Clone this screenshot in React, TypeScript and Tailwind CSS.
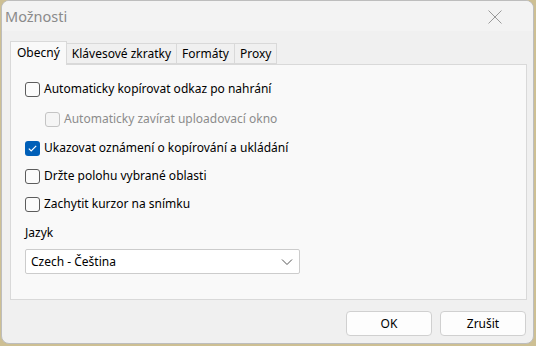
export default function App() {
  const font = { fontFamily: '"Segoe UI", "Noto Sans", sans-serif' }
  return (
    <div className="w-[536px] h-[346px] bg-[#cdbf93] overflow-hidden" style={font}>
      <div className="ml-[1px] w-[533px] h-[344px] rounded-[8px] bg-[#f0f0f0] border border-[#bdbdbd] flex flex-col overflow-hidden">
        {/* Title bar */}
        <div className="h-[30px] bg-[#f3f3f3] flex items-center justify-between pl-[3px] pr-[30px]">
          <span className="text-[14.5px] text-[#8a8a8a] leading-none">Možnosti</span>
          <svg width="16" height="16" viewBox="0 0 16 16" className="mt-[1px]">
            <path d="M1.5 1.5 L14.5 14.5 M14.5 1.5 L1.5 14.5" stroke="#9a9a9a" strokeWidth="1" />
          </svg>
        </div>

        {/* Tabs */}
        <div className="mt-[9px] ml-[8px] flex items-end h-[24px] text-[12px] text-black">
          <div className="h-[24px] px-[6px] bg-[#f9f9f9] border border-b-0 border-[#d9d9d9] flex items-center relative z-10 -mb-px pb-[2px]">
            Obecný
          </div>
          <div className="h-[21px] px-[5px] bg-[#f0f0f0] border border-l-0 border-[#d9d9d9] flex items-center">Klávesové zkratky</div>
          <div className="h-[21px] px-[5px] bg-[#f0f0f0] border border-l-0 border-[#d9d9d9] flex items-center">Formáty</div>
          <div className="h-[21px] px-[5px] bg-[#f0f0f0] border border-l-0 border-[#d9d9d9] flex items-center">Proxy</div>
        </div>

        {/* Panel */}
        <div className="ml-[8px] w-[517px] h-[236px] bg-[#f9f9f9] border border-[#d9d9d9] px-[14px] pt-[9px] text-[12px] text-black">
          <Check label="Automaticky kopírovat odkaz po nahrání" tall />
          <div className="pl-[20px]">
            <Check label="Automaticky zavírat uploadovací okno" disabled tall />
          </div>
          <Check label="Ukazovat oznámení o kopírování a ukládání" checked />
          <Check label="Držte polohu vybrané oblasti" />
          <Check label="Zachytit kurzor na snímku" />
          <div className="mt-[5px] h-[20px] flex items-center">Jazyk</div>
          <div className="mt-[6px] w-[275px] h-[25px] bg-white border border-[#cccccc] rounded-[2px] flex items-center justify-between pl-[5px] pr-[6px]">
            <span>Czech - Čeština</span>
            <svg width="12" height="8" viewBox="0 0 12 8">
              <path d="M1 1.5 L6 6.5 L11 1.5" fill="none" stroke="#555" strokeWidth="1" />
            </svg>
          </div>
        </div>

        {/* Buttons */}
        <div className="mt-[11px] pr-[7px] flex justify-end gap-[8px] text-[12px] text-black">
          <button className="w-[86px] h-[25px] bg-[#fdfdfd] border border-[#d0d0d0] rounded-[4px]">OK</button>
          <button className="w-[86px] h-[25px] bg-[#fdfdfd] border border-[#d0d0d0] rounded-[4px]">Zrušit</button>
        </div>
      </div>
    </div>
  )
}

function Check({ label, checked, disabled, tall }: { label: string; checked?: boolean; disabled?: boolean; tall?: boolean }) {
  return (
    <div className={tall ? 'h-[30px] flex items-center gap-[4px]' : 'h-[28px] flex items-center gap-[4px]'}>
      <span
        className={
          checked
            ? 'w-[15px] h-[15px] rounded-[3px] bg-[#005fb8] flex items-center justify-center'
            : disabled
            ? 'w-[15px] h-[15px] rounded-[3px] bg-[#f5f5f5] border border-[#c4c4c4]'
            : 'w-[15px] h-[15px] rounded-[3px] bg-[#fbfbfb] border border-[#5c5c5c]'
        }
      >
        {checked && (
          <svg width="9" height="7" viewBox="0 0 9 7">
            <path d="M0.8 3.6 L3.2 5.9 L8.2 0.9" fill="none" stroke="#fff" strokeWidth="1.2" />
          </svg>
        )}
      </span>
      <span className={disabled ? 'text-[#8c8c8c]' : ''}>{label}</span>
    </div>
  )
}
